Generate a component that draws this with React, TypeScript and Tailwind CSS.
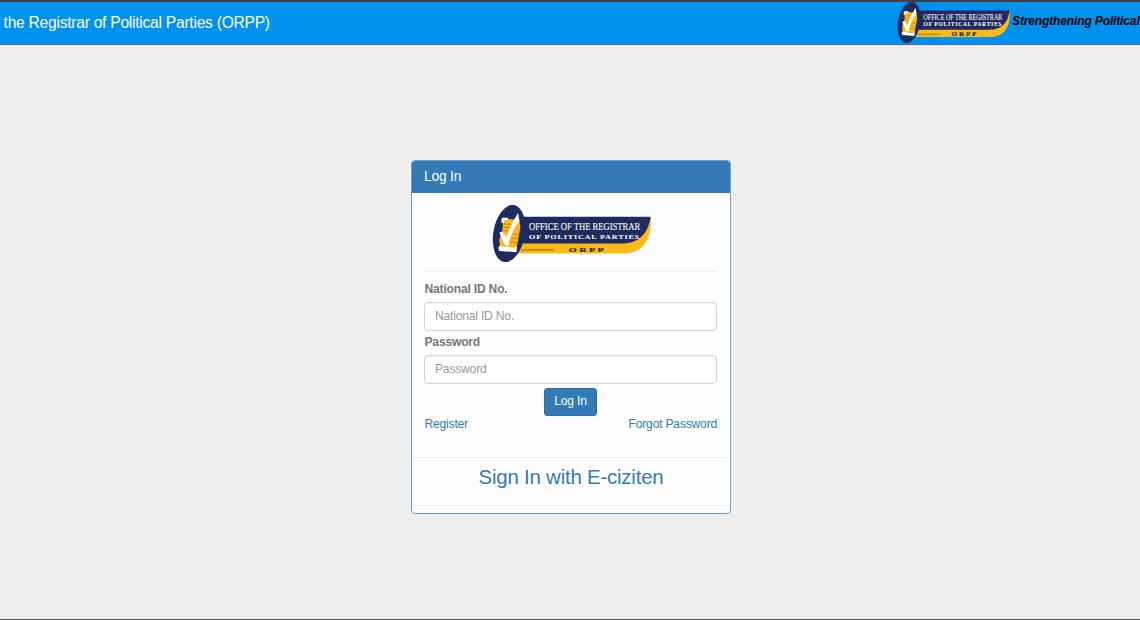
const Logo = ({ className }: { className: string }) => {
  return (
    <svg viewBox="24 22 476 170" preserveAspectRatio="none" className={className} role="img" aria-label="ORPP">
      <path d="M80 130H440L500 57C502 122 480 167 412 167H80Z" fill="#fdba16" />
      <path d="M95 57H498V63C489 106 466 137 410 137H95Z" fill="#1f2a5e" />
      <ellipse cx="75" cy="107" rx="47" ry="86" fill="#1f2a5e" transform="rotate(10 75 107)" />
      {/* paper stack */}
      <path d="M58 62L106 67L109 88L98 150L48 147L46 125L55 98Z" fill="#fdba16" />
      <path d="M60 78l34 3M58 88l30 3M56 98l28 3M87 109l18 2M82 120l20 3M78 132l22 3" stroke="#9c7318" strokeWidth="2" />
      <path d="M54 60q-4 8-1 16l7-1q-1-6 3-8h10l-2-7z" fill="#fff" />
      <path d="M45 144l42 5 12-2-2 16-50-4q-6-4-2-15z" fill="#fff" />
      <path d="M46 105l9-5 12 19q14-42 35-73l4 23q-24 30-34 76-9-2-12-8z" fill="#fff" />
      <path d="M112 156H209" stroke="#6d5420" strokeWidth="2.5" />
      <g fontFamily="'Liberation Serif', serif">
        <text x="135" y="97" fontSize="33" fill="#fff" stroke="#fff" strokeWidth=".3" textLength="333" lengthAdjust="spacingAndGlyphs">OFFICE OF THE REGISTRAR</text>
        <text x="135" y="123" fontSize="21" fontWeight="bold" fill="#fff" letterSpacing="2" textLength="332" lengthAdjust="spacingAndGlyphs">OF POLITICAL PARTIES</text>
        <text x="254" y="162" fontSize="21" fontWeight="bold" fill="#2d2927" stroke="#2d2927" strokeWidth=".6" letterSpacing="5" textLength="112" lengthAdjust="spacingAndGlyphs">ORPP</text>
      </g>
    </svg>
  )
}

const Header = () => {
  return (
    <header className="flex h-[45px] shrink-0 justify-between overflow-hidden whitespace-nowrap border-b border-t-2 border-b-[#5763c2] border-t-[#3c4043] bg-[#0092ee]">
      <h1 className="-ml-[13px] pt-[9px] text-[15.6px] leading-[24px] tracking-[-0.25px] text-white">of the Registrar of Political Parties (ORPP)</h1>
      <div className="flex w-[243px] shrink-0">
        <Logo className="h-[41px] w-[113px] shrink-0" />
        <p className="ml-[2px] pt-[10px] text-[12.1px] font-bold italic leading-[18px] tracking-[-0.18px] text-black">Strengthening Political</p>
      </div>
    </header>
  )
}

const Field = ({ label, type }: { label: string; type: string }) => {
  return (
    <label className="block font-bold text-[#777]">
      <span className="block h-[24px] pl-[0.5px] pt-[3px] leading-[17px]">{label}</span>
      <input
        type={type}
        placeholder={label}
        className="block h-[29px] w-full rounded-[4px] border border-[#d4d4d4] bg-white px-[10px] pb-[2px] font-normal tracking-[-0.2px] text-[#555] shadow-[inset_0_1px_1px_rgba(0,0,0,0.06)] outline-none placeholder:text-[#999]"
      />
    </label>
  )
}

const LoginPanel = () => {
  return (
    <section className="flex h-[354px] w-[320px] flex-col overflow-hidden rounded-[4px] border border-[#6e9fc9] bg-[#fefefe] text-[12.1px] tracking-[-0.2px]">
      <h2 className="h-[32px] shrink-0 bg-[#337ab7] px-[12px] text-[13.8px] leading-[31px] text-white">Log In</h2>
      <form className="pl-[12px] pr-[13px]" onSubmit={(e) => e.preventDefault()}>
        <div className="flex h-[79px] justify-center border-b border-[#ececec] pl-px pt-[12px]">
          <Logo className="h-[57px] w-[159px]" />
        </div>
        <div className="flex flex-col pt-[6px]">
          <Field label="National ID No." type="text" />
          <Field label="Password" type="password" />
        </div>
        <div className="flex justify-center pt-[4px]">
          <button className="h-[28px] w-[53px] rounded-[3px] border border-[#2e6da4] bg-[#337ab7] pb-[2px] text-white">Log In</button>
        </div>
        <div className="flex justify-between pl-[0.5px] leading-[16px] text-[#337ab7]">
          <a href="#">Register</a>
          <a href="#">Forgot Password</a>
        </div>
      </form>
      <div className="mt-[25px] h-[49px] shrink-0 border-y border-[#eee] text-center text-[20.4px] leading-[38px] text-[#337ab7]">
        <a href="#">Sign In with E-ciziten</a>
      </div>
    </section>
  )
}

const App = () => {
  return (
    <div className="flex h-screen flex-col overflow-hidden border-b border-[#58585a] bg-[#eee] font-['Liberation_Sans',Arial,sans-serif]">
      <Header />
      <main className="flex justify-center pl-[2px] pt-[115px]">
        <LoginPanel />
      </main>
    </div>
  )
}

export default App
